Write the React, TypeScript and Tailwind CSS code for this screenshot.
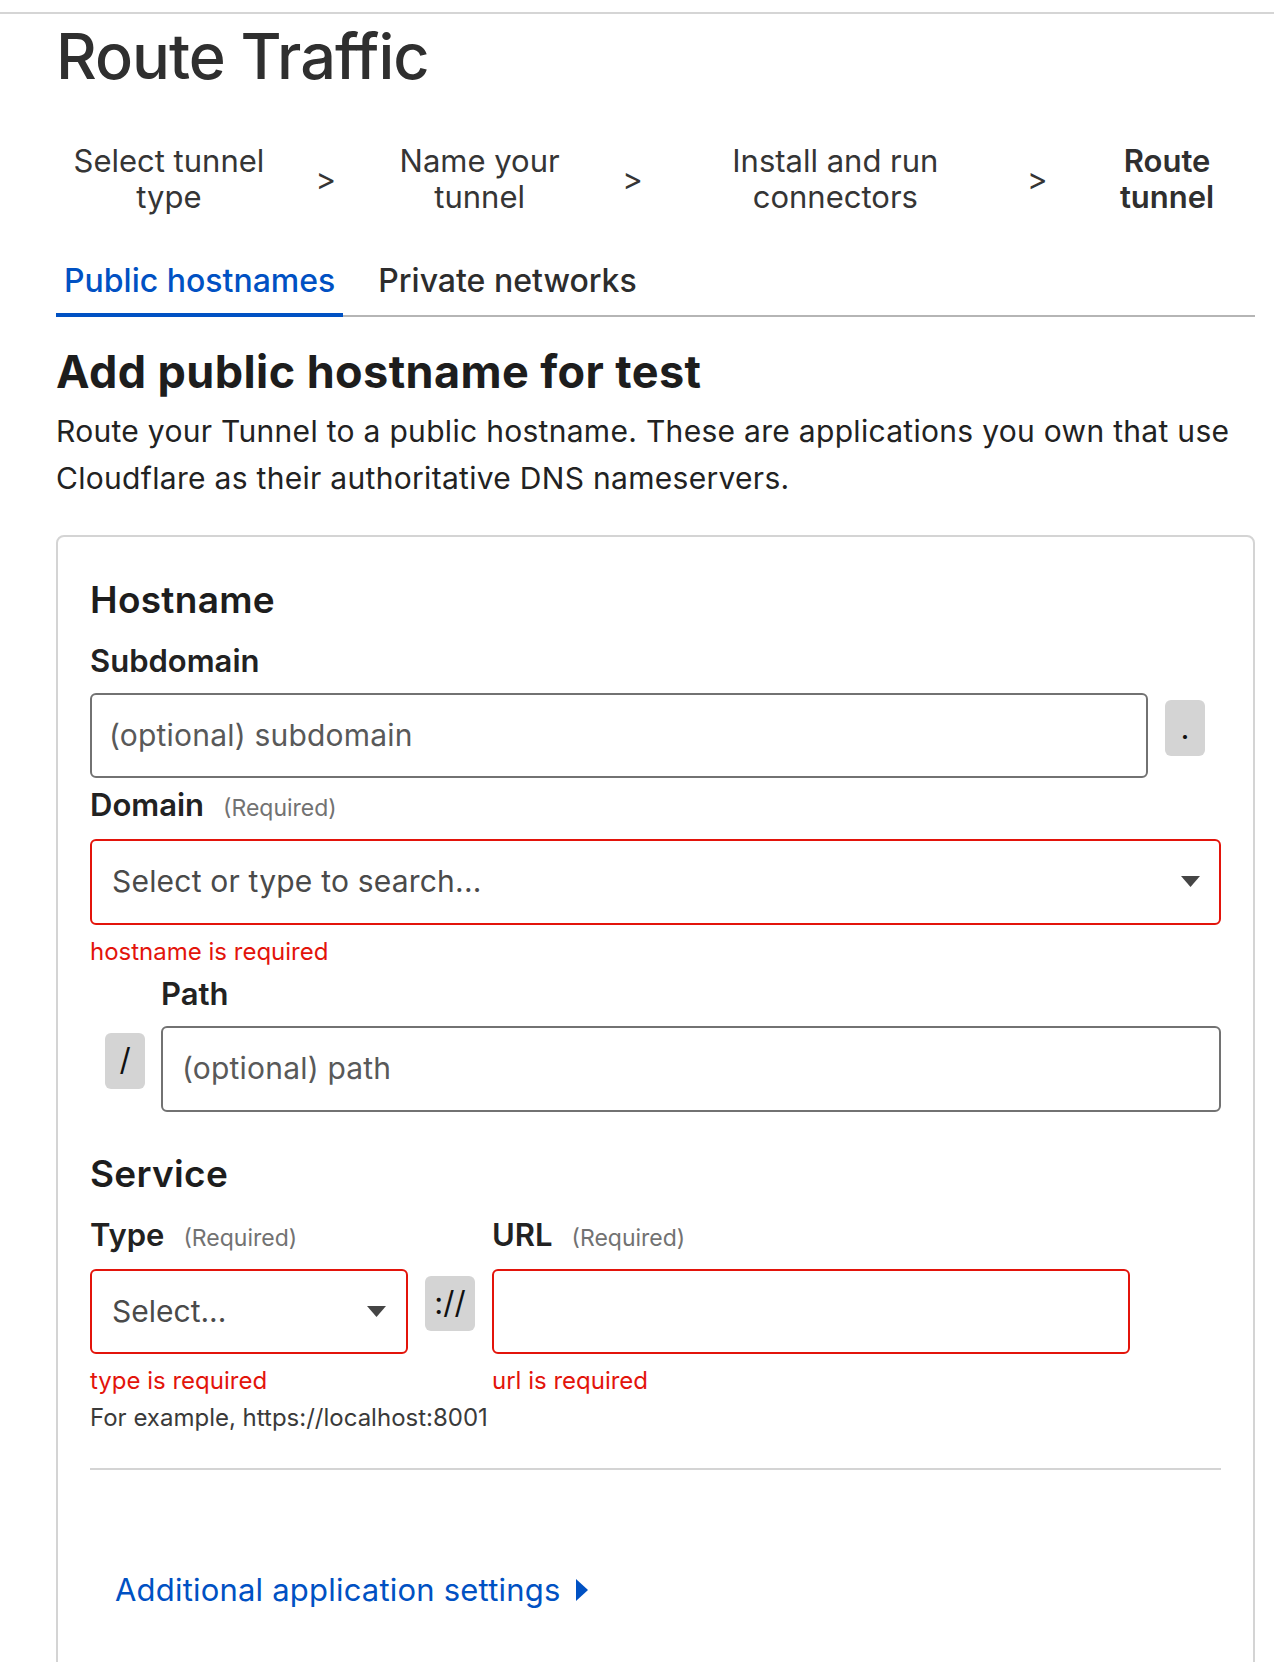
import React from 'react';

const steps = [
  { lines: ['Select tunnel', 'type'], width: 'w-[226px]', active: false },
  { lines: ['Name your', 'tunnel'], width: 'w-[220px]', active: false },
  { lines: ['Install and run', 'connectors'], width: 'w-[320px]', active: false },
  { lines: ['Route', 'tunnel'], width: 'w-[176px]', active: true },
];
const sepWidths = ['w-[88px]', 'w-[86px]', 'w-[84px]'];

function CaretDown() {
  return (
    <svg width="19" height="11" viewBox="0 0 19 11" className="shrink-0">
      <polygon points="0,0 19,0 9.5,11" fill="#454545" />
    </svg>
  );
}

function Label({ text, required }: { text: string; required?: boolean }) {
  return (
    <div className="flex items-baseline">
      <span className="text-[31px] leading-[38px] font-semibold text-[#222]">{text}</span>
      {required && <span className="ml-[19px] text-[23px] text-[#727272]">(Required)</span>}
    </div>
  );
}

function ErrorText({ children }: { children: React.ReactNode }) {
  return <div className="mt-[11px] text-[24px] leading-[32px] text-[#e3140b]">{children}</div>;
}

export default function App() {
  return (
    <div className="min-h-screen bg-white font-[Inter,sans-serif] text-[#2b2b2b]">
      <div className="pt-[12px]">
        <div className="h-[2px] bg-[#d5d5d5]" />
      </div>

      <div className="ml-[56px] w-[1199px]">
        <h1 className="mt-[11px] text-[63px] leading-[63px] font-medium tracking-[-1px] text-[#2f2f2f]">Route Traffic</h1>

        {/* Wizard steps */}
        <div className="mt-[55px] flex items-center">
          {steps.map((step, i) => (
            <React.Fragment key={step.lines.join(' ')}>
              <div
                className={`${step.width} text-center text-[31px] leading-[36px] ${
                  step.active ? 'font-semibold text-[#2f2f2f]' : 'text-[#353535]'
                }`}
              >
                {step.lines[0]}
                <br />
                {step.lines[1]}
              </div>
              {i < 3 && (
                <div className={`${sepWidths[i]} text-center text-[31px] leading-[36px] text-[#353535]`}>&gt;</div>
              )}
            </React.Fragment>
          ))}
        </div>

        {/* Tabs */}
        <div className="mt-[46px] flex border-b-2 border-[#b5b5b5]">
          <div className="-mb-[2px] border-b-4 border-[#0051c3] px-[8px] pb-[12px] text-[32px] leading-[40px] font-medium text-[#0051c3]">
            Public hostnames
          </div>
          <div className="ml-[35px] pb-[12px] text-[32px] leading-[40px] font-medium text-[#2d2d2d]">
            Private networks
          </div>
        </div>

        <h2 className="mt-[29px] text-[45px] leading-[52px] font-bold tracking-[0.4px] text-[#1d1d1d]">
          Add public hostname for test
        </h2>
        <p className="mt-[10px] text-[30px] leading-[47px] tracking-[0.3px] text-[#222]">
          Route your Tunnel to a public hostname. These are applications you own that use Cloudflare as their
          authoritative DNS nameservers.
        </p>

        {/* Form card */}
        <div className="mt-[33px] rounded-[8px] border-2 border-[#d4d4d4] px-[32px] pt-[41px] pb-[60px]">
          <h3 className="text-[37px] leading-[44px] font-semibold tracking-[0.3px] text-[#1d1d1d]">Hostname</h3>

          <div className="mt-[20px]">
            <Label text="Subdomain" />
          </div>
          <div className="mt-[13px] flex items-start">
            <div className="flex h-[85px] flex-1 items-center rounded-[6px] border-2 border-[#727272] pl-[17px] text-[30px] tracking-[0.2px] text-[#595959]">
              (optional) subdomain
            </div>
            <div className="mt-[7px] ml-[17px] mr-[16px] flex h-[56px] w-[40px] items-center justify-center rounded-[6px] bg-[#d4d4d4] text-[31px] text-[#111]">
              .
            </div>
          </div>

          <div className="mt-[8px]">
            <Label text="Domain" required />
          </div>
          <div className="mt-[13px] flex h-[86px] items-center justify-between rounded-[6px] border-2 border-[#e3140b] pl-[20px] pr-[19px]">
            <span className="text-[30px] tracking-[0.2px] text-[#4a4a4a]">Select or type to search...</span>
            <CaretDown />
          </div>
          <ErrorText>hostname is required</ErrorText>

          {/* Path */}
          <div className="mt-[7px] flex items-start">
            <div className="mt-[58px] ml-[15px] flex h-[56px] w-[40px] items-center justify-center rounded-[6px] bg-[#d4d4d4] text-[31px] text-[#111]">
              /
            </div>
            <div className="ml-[16px] flex-1">
              <Label text="Path" />
              <div className="mt-[13px] flex h-[86px] items-center rounded-[6px] border-2 border-[#727272] pl-[19px] text-[30px] tracking-[0.2px] text-[#595959]">
                (optional) path
              </div>
            </div>
          </div>

          <h3 className="mt-[40px] text-[37px] leading-[44px] font-semibold tracking-[0.3px] text-[#1d1d1d]">Service</h3>

          <div className="mt-[20px] flex items-start">
            <div className="w-[318px]">
              <Label text="Type" required />
              <div className="mt-[14px] flex h-[85px] items-center justify-between rounded-[6px] border-2 border-[#e3140b] pl-[20px] pr-[20px]">
                <span className="text-[30px] text-[#4a4a4a]">Select...</span>
                <CaretDown />
              </div>
              <ErrorText>type is required</ErrorText>
            </div>
            <div className="mt-[60px] ml-[17px] flex h-[55px] w-[50px] items-center justify-center rounded-[6px] bg-[#d4d4d4] text-[31px] text-[#111]">
              ://
            </div>
            <div className="ml-[17px] w-[638px]">
              <Label text="URL" required />
              <div className="mt-[14px] h-[85px] rounded-[6px] border-2 border-[#e3140b]" />
              <ErrorText>url is required</ErrorText>
            </div>
          </div>
          <div className="mt-[5px] text-[24px] leading-[32px] text-[#3a3a3a]">For example, https://localhost:8001</div>

          <div className="mt-[34px] h-[2px] bg-[#d4d4d4]" />

          <div className="mt-[101px] flex items-center pl-[25px] text-[31px] leading-[38px] tracking-[0.2px] text-[#0051c3]">
            <span>Additional application settings</span>
            <svg width="12" height="22" viewBox="0 0 12 22" className="ml-[16px]">
              <polygon points="0,0 12,11 0,22" fill="#0051c3" />
            </svg>
          </div>
        </div>
      </div>
    </div>
  );
}
